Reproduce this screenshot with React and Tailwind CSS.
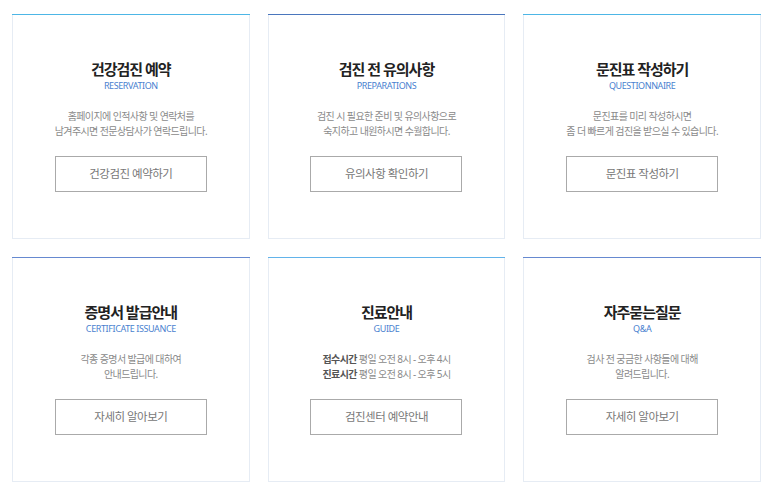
import React from "react";

const cards = [
  {
    title: "건강검진 예약",
    sub: "RESERVATION",
    lines: ["홈페이지에 인적사항 및 연락처를", "남겨주시면 전문상담사가 연락드립니다."],
    btn: "건강검진 예약하기",
    bar: "bg-[#4db6e6]",
  },
  {
    title: "검진 전 유의사항",
    sub: "PREPARATIONS",
    lines: ["검진 시 필요한 준비 및 유의사항으로", "숙지하고 내원하시면 수월합니다."],
    btn: "유의사항 확인하기",
    bar: "bg-[#4a76bd]",
  },
  {
    title: "문진표 작성하기",
    sub: "QUESTIONNAIRE",
    lines: ["문진표를 미리 작성하시면", "좀 더 빠르게 검진을 받으실 수 있습니다."],
    btn: "문진표 작성하기",
    bar: "bg-[#4db6e6]",
  },
  {
    title: "증명서 발급안내",
    sub: "CERTIFICATE ISSUANCE",
    lines: ["각종 증명서 발급에 대하여", "안내드립니다."],
    btn: "자세히 알아보기",
    bar: "bg-[#6689d0]",
  },
  {
    title: "진료안내",
    sub: "GUIDE",
    guide: true,
    btn: "검진센터 예약안내",
    bar: "bg-[#62b3ea]",
  },
  {
    title: "자주묻는질문",
    sub: "Q&A",
    lines: ["검사 전 궁금한 사항들에 대해", "알려드립니다."],
    btn: "자세히 알아보기",
    bar: "bg-[#6689d0]",
  },
];

function Card({ c }) {
  return (
    <div className="flex flex-col border-x border-b border-[#e6ecf4] bg-white">
      <div className={`h-px -mx-px ${c.bar}`} />
      <div className="flex flex-col items-center pt-[44px] pb-[46px]">
        <div className="text-[15px] leading-[20px] font-bold text-[#222] tracking-[-1px]">
          {c.title}
        </div>
        <div className="text-[9px] leading-[14px] text-[#4a7fcf] tracking-[-0.4px]">
          {c.sub}
        </div>
        <div className="mt-[16px] text-[10px] leading-[15px] text-[#8a8a8a] text-center tracking-[-0.6px]">
          {c.guide ? (
            <>
              <div>
                <span className="font-bold text-[#555]">접수시간</span> 평일 오전 8시 - 오후 4시
              </div>
              <div>
                <span className="font-bold text-[#555]">진료시간</span> 평일 오전 8시 - 오후 5시
              </div>
            </>
          ) : (
            c.lines.map((l, i) => <div key={i}>{l}</div>)
          )}
        </div>
        <div className="mt-[17px] w-[152px] h-[36px] border border-[#aaaaaa] flex items-center justify-center text-[11.5px] text-[#777] tracking-[-0.5px]">
          {c.btn}
        </div>
      </div>
    </div>
  );
}

export default function App() {
  return (
    <div
      className="w-[773px] h-[494px] bg-white pt-[14px] pl-[12px] pr-[12px] grid grid-cols-3 gap-x-[18px] gap-y-[18px] content-start"
      style={{ fontFamily: '"Noto Sans", "Noto Sans CJK KR", sans-serif' }}
    >
      {cards.map((c, i) => (
        <Card key={i} c={c} />
      ))}
    </div>
  );
}
